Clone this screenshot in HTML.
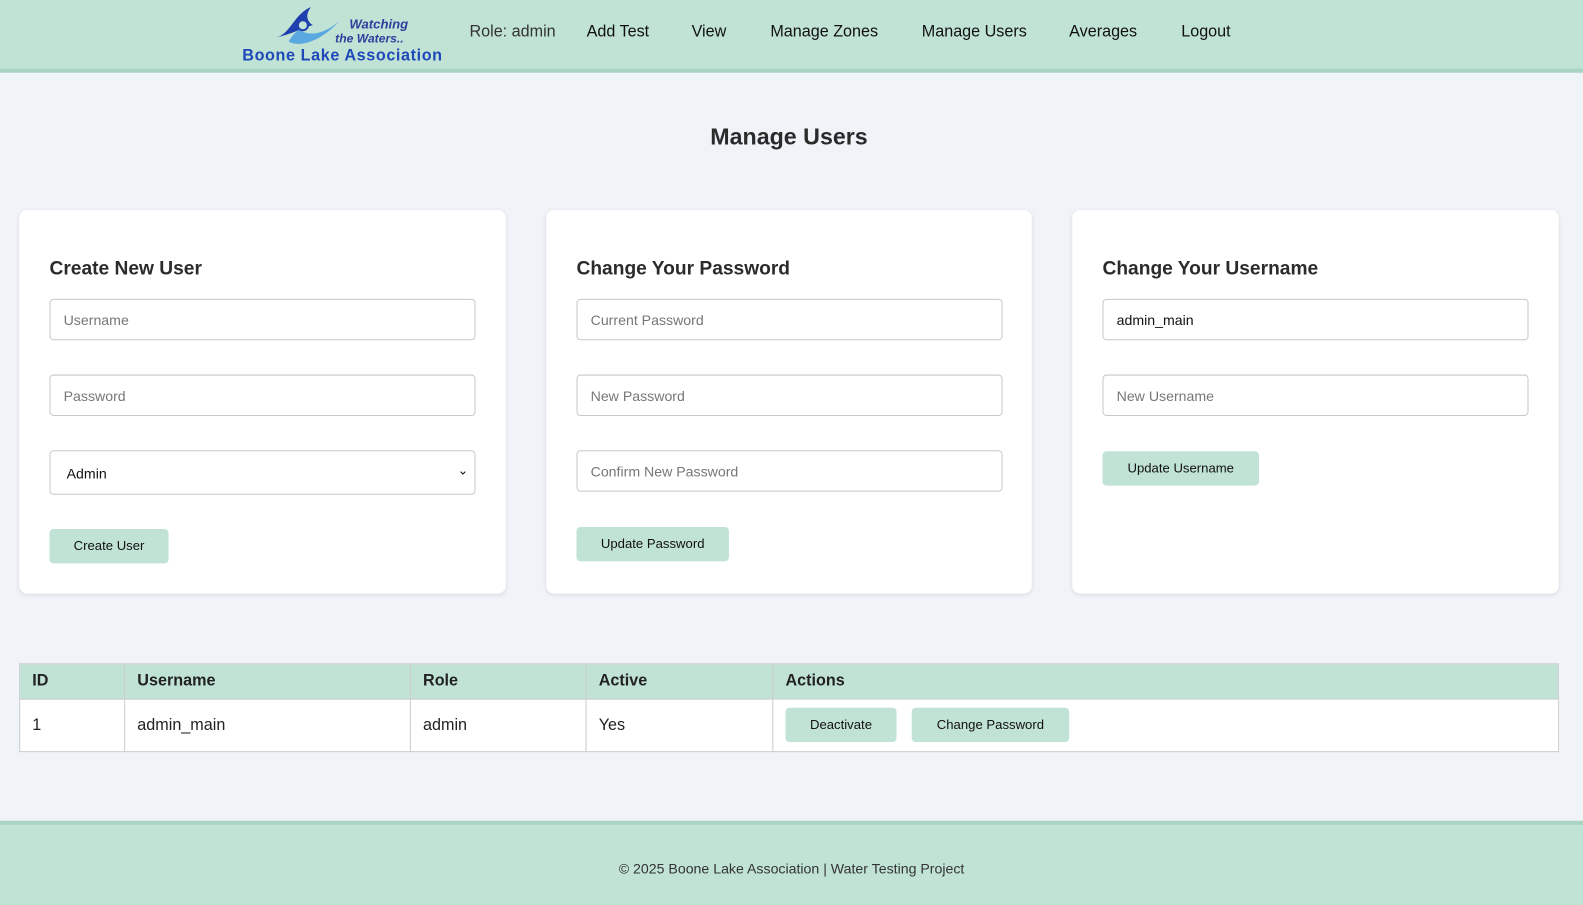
<!DOCTYPE html>
<html><head><style>
*{box-sizing:border-box;margin:0;padding:0}
html,body{width:1583px;height:905px;overflow:hidden;background:#f0f3f8}
#w{width:1568px;height:897px;position:relative;transform:scale(1.0096);transform-origin:0 0;font-family:"Liberation Sans",Arial,sans-serif;color:#222}
.hdr{position:absolute;left:0;top:0;width:1583px;height:72px;background:#c1e3d5;border-bottom:4px solid #a9d4c2}
.nav{position:absolute;top:23px;font-size:16px;color:#111}
h1{position:absolute;top:122px;width:1563px;text-align:center;font-size:23px;font-weight:bold;color:#2b2b2b}
.card{position:absolute;top:208px;width:482px;height:380px;background:#fff;border-radius:8px;box-shadow:0 1px 4px rgba(0,0,0,.1)}
.card h2{position:absolute;left:30px;top:48px;font-size:19px;font-weight:bold;color:#2b2b2b}
.in{position:absolute;left:30px;width:422px;height:41px;border:1px solid #c8c8c8;border-radius:4px;font-size:14px;color:#777;padding:12px 13px}
.btn{position:absolute;background:#c1e3d5;border-radius:4px;font-size:13px;color:#111;text-align:center;height:34px;line-height:34px}
table{position:absolute;left:19px;top:657px;width:1525px;border-collapse:collapse;font-size:16px}
td,th{border:1px solid #ccc;text-align:left;padding:0 12px}
th{background:#c1e3d5;height:35px;font-weight:bold;color:#222}
td{background:#fff;height:52px}
.ft{position:absolute;left:0;top:813px;width:1568px;height:92px;background:#c1e3d5;border-top:4px solid #a9d4c2;text-align:center;font-size:14px;line-height:86px;color:#333}
</style></head><body><div id="w">
<div class="hdr">
<svg style="position:absolute;left:270px;top:3px" width="70" height="44" viewBox="0 0 70 44"><path d="M4 34 C18 30 22 10 38 4 C32 12 34 18 40 22 C30 24 22 30 4 34Z" fill="#1f3fae"/><path d="M16 38 C24 44 46 40 66 18 C52 30 36 34 26 26 C22 30 18 34 16 38Z" fill="#5aa8e0"/><circle cx="30" cy="22" r="5" fill="#c1e3d5" stroke="#1f3fae" stroke-width="2"/></svg>
<div style="position:absolute;left:346px;top:16px;font-size:13px;font-style:italic;font-weight:bold;color:#2a3f9e">Watching</div>
<div style="position:absolute;left:332px;top:31px;font-size:12px;font-style:italic;font-weight:bold;color:#2a3f9e">the Waters..</div>
<div style="position:absolute;left:240px;top:47px;font-size:16px;font-weight:bold;color:#1f48b8;letter-spacing:.6px">Boone Lake Association</div>
<div class="nav" style="left:465px;color:#333">Role: admin</div>
<div class="nav" style="left:581px">Add Test</div>
<div class="nav" style="left:685px">View</div>
<div class="nav" style="left:763px">Manage Zones</div>
<div class="nav" style="left:913px">Manage Users</div>
<div class="nav" style="left:1059px">Averages</div>
<div class="nav" style="left:1170px">Logout</div>
</div>
<h1>Manage Users</h1>
<div class="card" style="left:19px"><h2>Create New User</h2>
<div class="in" style="top:88px">Username</div>
<div class="in" style="top:163px">Password</div>
<div class="in" style="top:238px;height:44px;color:#111;padding:14px 16px">Admin<span style="position:absolute;right:6px;top:11px;font-size:13px">&#8964;</span></div>
<div class="btn" style="left:30px;top:316px;width:118px">Create User</div></div>
<div class="card" style="left:541px;width:481px"><h2>Change Your Password</h2>
<div class="in" style="top:88px">Current Password</div>
<div class="in" style="top:163px">New Password</div>
<div class="in" style="top:238px">Confirm New Password</div>
<div class="btn" style="left:30px;top:314px;width:151px">Update Password</div></div>
<div class="card" style="left:1062px"><h2>Change Your Username</h2>
<div class="in" style="top:88px;color:#111">admin_main</div>
<div class="in" style="top:163px">New Username</div>
<div class="btn" style="left:30px;top:239px;width:155px">Update Username</div></div>
<table><tr><th style="width:104px">ID</th><th style="width:283px">Username</th><th style="width:174px">Role</th><th style="width:185px">Active</th><th>Actions</th></tr>
<tr><td>1</td><td>admin_main</td><td>admin</td><td>Yes</td><td style="position:relative"><div class="btn" style="left:12px;top:8px;width:110px">Deactivate</div><div class="btn" style="left:137px;top:8px;width:156px">Change Password</div></td></tr></table>
<div class="ft">© 2025 Boone Lake Association | Water Testing Project</div>
</div></body></html>
